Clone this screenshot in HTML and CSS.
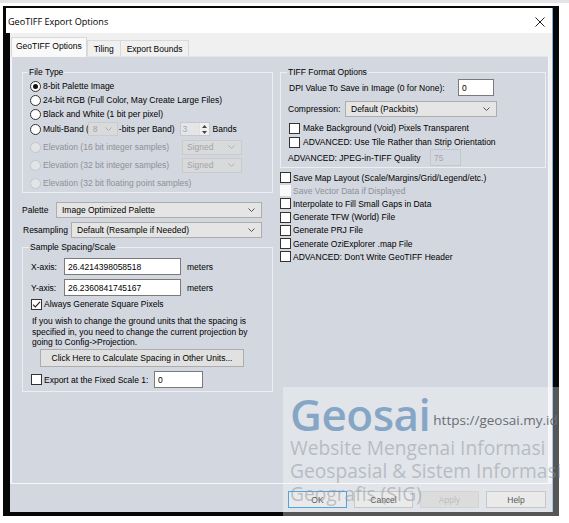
FILE: index.html
```html
<!DOCTYPE html>
<html>
<head>
<meta charset="utf-8">
<title>GeoTIFF Export Options</title>
<link rel="stylesheet" href="styles.css">
</head>
<body>
<div class="topband"></div>
<div class="window">
  <div class="titlebar">
    <span class="title">GeoTIFF Export Options</span>
    <svg class="close" width="10" height="10" viewBox="0 0 10 10"><path d="M0.5 0.5L9.5 9.5M9.5 0.5L0.5 9.5" stroke="#1e1e1e" stroke-width="1" fill="none"/></svg>
  </div>
  <div class="body">
    <div class="tabs">
      <div class="tab sel">GeoTIFF Options</div>
      <div class="tab">Tiling</div>
      <div class="tab">Export Bounds</div>
    </div>
    <div class="panel">
      <div class="col left">
        <fieldset class="grp filetype">
          <legend>File Type</legend>
          <div class="row r1"><span class="radio on"></span>8-bit Palette Image</div>
          <div class="row r1"><span class="radio"></span>24-bit RGB (Full Color, May Create Large Files)</div>
          <div class="row r1"><span class="radio"></span>Black and White (1 bit per pixel)</div>
          <div class="row rmb"><span class="radio"></span>Multi-Band (<span class="combo dis mini"><span class="ctext">8</span><svg class="chev" width="7" height="4" viewBox="0 0 7 4"><path d="M0.5 0.5L3.5 3.5L6.5 0.5" stroke="#b0b0b0" fill="none"/></svg></span><span class="bpb">-bits per Band)</span><span class="spin"><span class="stext">3</span><span class="arrows"><span class="arr"><svg width="5" height="3" viewBox="0 0 5 3"><path d="M0 3L2.5 0L5 3Z" fill="#444"/></svg></span><span class="arr"><svg width="5" height="3" viewBox="0 0 5 3"><path d="M0 0L2.5 3L5 0Z" fill="#444"/></svg></span></span></span><span class="bands">Bands</span></div>
          <div class="row rel1 dis"><span class="radio dis"></span><span class="ellabel">Elevation (16 bit integer samples)</span><span class="combo dis sg"><span class="ctext">Signed</span><svg class="chev" width="7" height="4" viewBox="0 0 7 4"><path d="M0.5 0.5L3.5 3.5L6.5 0.5" stroke="#b0b0b0" fill="none"/></svg></span></div>
          <div class="row rel dis"><span class="radio dis"></span><span class="ellabel">Elevation (32 bit integer samples)</span><span class="combo dis sg"><span class="ctext">Signed</span><svg class="chev" width="7" height="4" viewBox="0 0 7 4"><path d="M0.5 0.5L3.5 3.5L6.5 0.5" stroke="#b0b0b0" fill="none"/></svg></span></div>
          <div class="row rel dis"><span class="radio dis"></span>Elevation (32 bit floating point samples)</div>
        </fieldset>
        <div class="selrow pal"><span class="slabel">Palette</span><span class="combo wide"><span class="ctext">Image Optimized Palette</span><svg class="chev" width="7" height="4" viewBox="0 0 7 4"><path d="M0.5 0.5L3.5 3.5L6.5 0.5" stroke="#555" fill="none"/></svg></span></div>
        <div class="selrow res"><span class="slabel">Resampling</span><span class="combo wide"><span class="ctext">Default (Resample if Needed)</span><svg class="chev" width="7" height="4" viewBox="0 0 7 4"><path d="M0.5 0.5L3.5 3.5L6.5 0.5" stroke="#555" fill="none"/></svg></span></div>
        <fieldset class="grp spacing">
          <legend>Sample Spacing/Scale</legend>
          <div class="axrow first"><span class="axlabel">X-axis:</span><span class="input ax">26.4214398058518</span><span class="unit">meters</span></div>
          <div class="axrow"><span class="axlabel">Y-axis:</span><span class="input ax">26.2360841745167</span><span class="unit">meters</span></div>
          <div class="row chkrow"><span class="check"><svg width="9" height="9" viewBox="0 0 9 9"><path d="M1 4.6L3.3 6.9L8 1.8" stroke="#222" stroke-width="1.1" fill="none"/></svg></span>Always Generate Square Pixels</div>
          <p class="note">If you wish to change the ground units that the spacing is specified in, you need to change the current projection by going to Config-&gt;Projection.</p>
          <div class="btn calc">Click Here to Calculate Spacing in Other Units...</div>
          <div class="row exprow"><span class="check"></span><span class="explabel">Export at the Fixed Scale 1:</span><span class="input sc">0</span></div>
        </fieldset>
      </div>
      <div class="col right">
        <fieldset class="grp tiff">
          <legend>TIFF Format Options</legend>
          <div class="trow dpi"><span class="dpilabel">DPI Value To Save in Image (0 for None):</span><span class="input dpiin">0</span></div>
          <div class="trow comp"><span class="complabel">Compression:</span><span class="combo cmp"><span class="ctext">Default (Packbits)</span><svg class="chev" width="7" height="4" viewBox="0 0 7 4"><path d="M0.5 0.5L3.5 3.5L6.5 0.5" stroke="#555" fill="none"/></svg></span></div>
          <div class="row tchk first"><span class="check"></span>Make Background (Void) Pixels Transparent</div>
          <div class="row tchk"><span class="check"></span>ADVANCED: Use Tile Rather than Strip Orientation</div>
          <div class="trow jpeg"><span class="jlabel">ADVANCED: JPEG-in-TIFF Quality</span><span class="input dis q">75</span></div>
        </fieldset>
        <div class="chklist">
          <div class="row lrow"><span class="check"></span>Save Map Layout (Scale/Margins/Grid/Legend/etc.)</div>
          <div class="row lrow dis"><span class="check dis"></span>Save Vector Data if Displayed</div>
          <div class="row lrow"><span class="check"></span>Interpolate to Fill Small Gaps in Data</div>
          <div class="row lrow"><span class="check"></span>Generate TFW (World) File</div>
          <div class="row lrow"><span class="check"></span>Generate PRJ File</div>
          <div class="row lrow"><span class="check"></span>Generate OziExplorer .map File</div>
          <div class="row lrow"><span class="check"></span>ADVANCED: Don't Write GeoTIFF Header</div>
        </div>
      </div>
    </div>
    <div class="buttons">
      <div class="btn dlg ok">OK</div>
      <div class="btn dlg">Cancel</div>
      <div class="btn dlg disb">Apply</div>
      <div class="btn dlg help">Help</div>
    </div>
  </div>
</div>
<div class="watermark">
  <div class="wm-head"><span class="wm-logo">Geosai</span><span class="wm-url">https://geosai.my.id</span></div>
  <div class="wm-line">Website Mengenai Informasi</div>
  <div class="wm-line">Geospasial &amp; Sistem Informasi</div>
  <div class="wm-line">Geografis (SIG)</div>
</div>
</body>
</html>
```

FILE: styles.css
```css
* { box-sizing: border-box; }

html, body {
  margin: 0;
  padding: 0;
}

body {
  position: relative;
  width: 569px;
  height: 523px;
  overflow: hidden;
  background: #ffffff;
  font-family: "Liberation Sans", Arial, sans-serif;
  font-size: 8.5px;
  color: #000;
}

.topband {
  height: 3px;
  background: #e2e4e7;
}

.window {
  margin: 3px 0 0 3px;
  width: 556px;
  height: 510px;
  background: #070707;
  padding: 2px 6px 4px 3px;
  display: flex;
  flex-direction: column;
}

.titlebar {
  height: 25px;
  flex: none;
  background: #fff;
  border-right: 1px solid #79b0e4;
  display: flex;
  align-items: center;
  justify-content: space-between;
  padding: 2px 7px 0 2px;
}

.title {
  font-family: "Open Sans", "Noto Sans", sans-serif;
  font-size: 9.1px;
  color: #000;
}

.close { display: block; }

.body {
  flex: 1;
  margin-left: 4px;
  background: #f0f0f0;
  border-right: 1px solid #79b0e4;
  display: flex;
  flex-direction: column;
}

/* tabs */
.tabs {
  height: 23px;
  flex: none;
  display: flex;
  align-items: flex-end;
  padding-left: 1px;
  position: relative;
  z-index: 1;
}

.tab {
  height: 16px;
  padding: 0 6px;
  display: flex;
  align-items: center;
  background: #f0f0f0;
  border: 1px solid #d9d9d9;
  border-bottom: none;
}

.tab.sel {
  height: 20px;
  margin-bottom: -1px;
  padding: 0 4px 3px 4px;
  background: #f9f9f9;
  border-color: #d9d9d9;
}

.tab + .tab { margin-left: -1px; }
.tab.sel + .tab { margin-left: 0; }

/* panel */
.panel {
  flex: none;
  margin-left: 1px;
  width: 538px;
  height: 428px;
  background: #d3d7df;
  border: 1px solid #f6f7f9;
  border-top-color: #e4e6ea;
  padding: 10px 0 0 10px;
  display: flex;
  gap: 7px;
}

.col { display: flex; flex-direction: column; }
.col.left { width: 251px; }
.col.right { width: 266px; }

.grp {
  margin: 0;
  border: 1px solid #eceef2;
  padding: 0;
  min-width: 0;
}

.grp legend {
  padding: 0 1px;
  line-height: 11px;
  height: 11px;
}

.row {
  display: flex;
  align-items: center;
  white-space: nowrap;
}

/* file type */
.filetype { padding: 1px 0 0 7px; }
.filetype legend { margin-left: -2px; }
.r1 { height: 14px; }
.rmb { height: 16px; }
.rel1 { height: 19px; padding-top: 1px; }
.rel { height: 18px; }

.radio {
  width: 11px;
  height: 11px;
  border-radius: 50%;
  border: 1px solid #333;
  background: #fff;
  margin-right: 2px;
  flex: none;
  display: flex;
  align-items: center;
  justify-content: center;
}
.radio.on::after {
  content: "";
  width: 5px;
  height: 5px;
  border-radius: 50%;
  background: #111;
}
.radio.dis {
  border-color: #c3c6cb;
  background: #e2e4e8;
}

.dis { color: #8e9197; }

.combo {
  display: flex;
  align-items: center;
  justify-content: space-between;
  background: #e5e5e5;
  border: 1px solid #adadad;
  color: #000;
  flex: none;
}
.combo .ctext { padding-left: 5px; }
.combo .chev { margin-right: 6px; flex: none; }
.combo.dis {
  background: #d9dadc;
  border-color: #cacbcd;
  color: #a2a4a8;
}
.combo.mini { width: 30px; height: 14px; margin-left: -1px; }
.combo.mini .ctext { padding-left: 4px; }
.combo.mini .chev { margin-right: 5px; }
.bpb { margin-left: 1px; }

.spin {
  margin-left: 5px;
  width: 30px;
  height: 14px;
  display: flex;
  border: 1px solid #c6c8cc;
  background: #e3e5e8;
  color: #a2a4a8;
}
.spin .stext { flex: 1; padding-left: 2px; line-height: 12px; }
.spin .arrows {
  width: 10px;
  display: flex;
  flex-direction: column;
}
.spin .arr {
  flex: 1;
  display: flex;
  align-items: center;
  justify-content: center;
  background: #f0f0f0;
  border-left: 1px solid #e0e0e0;
}
.spin .arr svg { display: block; }
.bands { margin-left: 3px; }

.ellabel { width: 139px; flex: none; }
.combo.sg { width: 60px; height: 15px; }
.combo.sg .ctext { padding-left: 4px; }

/* palette / resampling */
.selrow {
  height: 16px;
  display: flex;
  align-items: center;
}
.selrow.pal { margin-top: 9px; }
.selrow.res { margin-top: 4px; }
.pal .slabel { width: 34px; }
.res .slabel { width: 48px; margin-left: 1px; }
.combo.wide { height: 16px; flex: none; }
.pal .combo.wide { width: 206px; }
.res .combo.wide { width: 191px; }
.combo.wide .chev { margin-right: 6px; }

/* spacing */
.spacing {
  margin-top: 4px;
  padding: 5px 0 3px 8px;
}
.spacing legend { margin-left: -2px; }
.axrow {
  height: 17px;
  display: flex;
  align-items: center;
}
.axrow + .axrow { margin-top: 4px; }
.axlabel { width: 33px; flex: none; }

.input {
  display: flex;
  align-items: center;
  background: #fff;
  border: 1px solid #7a7a7a;
  padding-left: 3px;
  flex: none;
}
.input.ax { width: 117px; height: 17px; }
.unit { margin-left: 6px; }

.check {
  width: 11px;
  height: 11px;
  border: 1px solid #333;
  background: #fff;
  margin-right: 2px;
  flex: none;
  display: flex;
  align-items: center;
  justify-content: center;
}
.check svg { display: block; }
.check.dis { border-color: #fafafa; background: #fafafa; }

.chkrow { height: 14px; margin-top: 1px; }

.note {
  margin: 5px 0 0 1px;
  line-height: 10.7px;
  width: 222px;
}

.btn {
  display: flex;
  align-items: center;
  justify-content: center;
  background: #e1e1e1;
  border: 1px solid #adadad;
  flex: none;
}
.btn.calc {
  margin: 1px 0 0 9px;
  width: 204px;
  height: 18px;
}

.exprow { height: 17px; margin-top: 4px; }
.explabel { width: 110px; flex: none; }
.input.sc { width: 49px; height: 17px; }

/* right column */
.tiff { padding: 1px 0 1px 8px; }
.tiff legend { margin-left: -2px; }
.trow {
  display: flex;
  align-items: center;
  white-space: nowrap;
}
.trow.dpi { height: 17px; }
.dpilabel { width: 169px; flex: none; }
.input.dpiin { width: 36px; height: 17px; }

.trow.comp { height: 16px; margin-top: 5px; margin-left: -1px; }
.complabel { width: 57px; flex: none; }
.combo.cmp { width: 152px; height: 16px; }

.tchk { height: 14px; }
.tchk.first { margin-top: 4px; }
.tchk .check { width: 11px; height: 11px; margin-right: 3px; }

.trow.jpeg { height: 17px; margin-left: -1px; }
.jlabel { width: 142px; flex: none; }
.input.q {
  width: 31px;
  height: 17px;
  background: #d3d7df;
  border-color: #c3c7ce;
  color: #a4a7ac;
}

.chklist { margin-top: 3px; }
.lrow { height: 13.2px; }
.lrow .check { margin-right: 2px; }

/* bottom buttons */
.buttons {
  flex: 1;
  background: #d3d7df;
  display: flex;
  justify-content: flex-end;
  align-items: flex-start;
  gap: 7px;
  padding: 7px 6px 0 0;
}
.btn.dlg { width: 59px; height: 17px; }
.btn.ok { border-color: #0078d7; }
.btn.help { width: 60px; }
.btn.disb {
  background: #cccccc;
  border-color: #bfbfbf;
  color: #a0a0a0;
}

/* watermark overlay */
.watermark {
  position: absolute;
  left: 283px;
  top: 387px;
  width: 277px;
  height: 129px;
  background: rgba(255, 255, 255, 0.32);
  padding-left: 7px;
  font-family: "Open Sans", "Noto Sans", sans-serif;
  white-space: nowrap;
  overflow: hidden;
}
.wm-head {
  margin-top: 5px;
  height: 44px;
  line-height: 44px;
}
.wm-logo {
  font-size: 44px;
  font-weight: 600;
  letter-spacing: -0.5px;
  color: rgba(104, 146, 186, 0.75);
}
.wm-url {
  font-size: 13.5px;
  margin-left: 3px;
  color: #6a6e74;
  vertical-align: 6px;
}
.wm-line {
  font-size: 19.2px;
  line-height: 23px;
  color: rgba(140, 146, 155, 0.5);
}
```
